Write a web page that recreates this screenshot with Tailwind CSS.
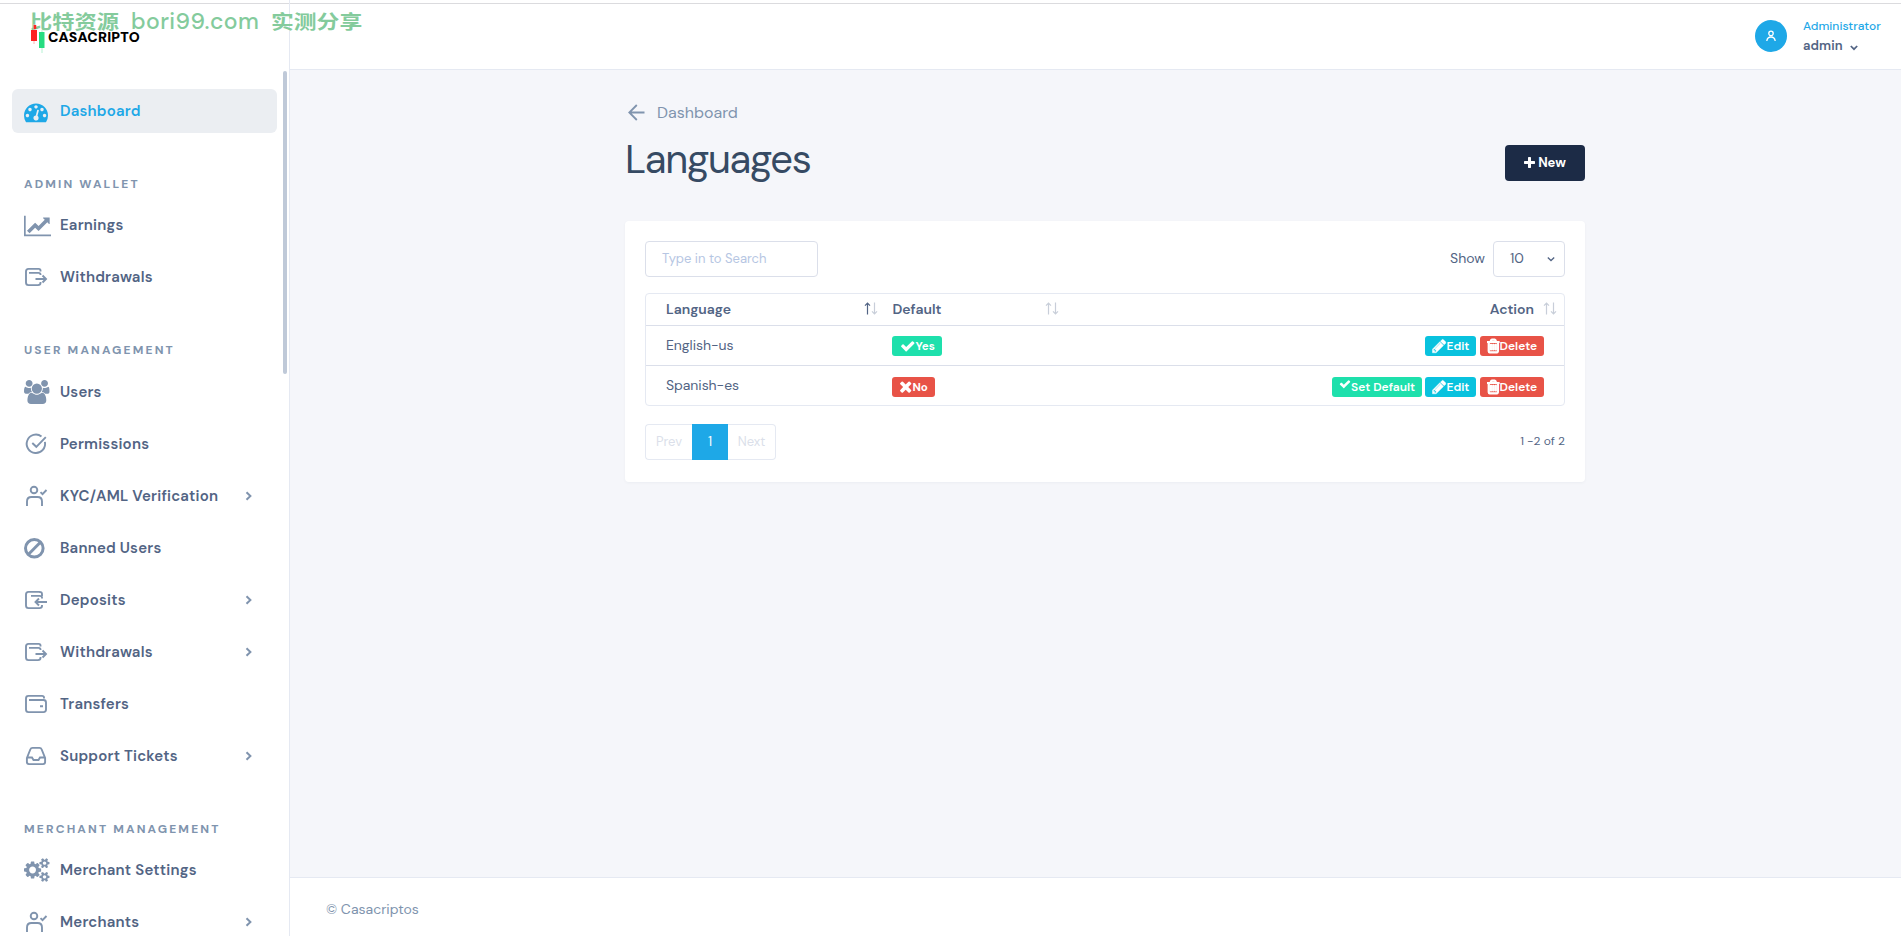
<!DOCTYPE html>
<html lang="en">
<head>
  <meta charset="UTF-8" />
  <meta name="viewport" content="width=device-width, initial-scale=1.0" />
  <title>Languages | Casacriptos</title>

  <script src="https://cdn.jsdelivr.net/npm/@tailwindcss/browser@4"></script>
</head>
<body class="h-[936px] overflow-hidden bg-[#f5f6fa] font-['DM_Sans',Inter,sans-serif] text-[14px] text-[#526484]">

  <!-- Icon set -->
  <svg class="hidden">
    <symbol id="i-dashboard" viewBox="0 0 1792 1792"><path d="M384 1152q0-53-37.5-90.5t-90.5-37.5-90.5 37.5-37.5 90.5 37.5 90.5 90.5 37.5 90.5-37.5 37.5-90.5zm192-448q0-53-37.500-90.500t-90.500-37.500-90.500 37.500-37.500 90.500 37.500 90.500 90.500 37.500 90.500-37.500 37.500-90.500zm428 481l101-382q6-26-7.500-48.500t-38.500-29.500-48 6.500-30 39.500l-101 382q-60 5-107 43.500t-63 98.500q-20 77 20 146t117 89 146-20 89-117q16-60-6-117t-72-91zm660-33q0-53-37.500-90.500t-90.500-37.500-90.500 37.500-37.500 90.500 37.500 90.500 90.500 37.500 90.500-37.500 37.500-90.500zm-640-640q0-53-37.500-90.500t-90.500-37.500-90.500 37.500-37.500 90.500 37.500 90.500 90.500 37.500 90.500-37.500 37.500-90.500zm448 192q0-53-37.500-90.500t-90.500-37.500-90.500 37.500-37.500 90.500 37.500 90.500 90.500 37.500 90.500-37.500 37.500-90.500zm320 448q0 261-141 483-19 29-54 29h-1402q-35 0-54-29-141-221-141-483 0-182 71-348t191-286 286-191 348-71 348 71 286 191 191 286 71 348z"/></symbol>
    <symbol id="i-chart" viewBox="0 0 2048 1792"><path d="M2048 1536v128h-2048v-1536h128v1408h1920zm-128-1248v435q0 21-19.500 29.500t-35.500-7.500l-121-121-633 633q-10 10-23 10t-23-10l-233-233-416 416-192-192 585-585q10-10 23-10t23 10l233 233 464-464-121-121q-16-16-7.500-35.500t29.500-19.500h435q14 0 23 9t9 23z"/></symbol>
    <symbol id="i-users" viewBox="0 0 1920 1792"><path d="M593 896q-162 5-265 128h-134q-82 0-138-40.500t-56-118.500q0-353 124-353 6 0 43.500 21t97.500 42.500 119 21.500q67 0 133-23-5 37-5 66 0 139 81 256zm1071 637q0 120-73 189.500t-194 69.500h-874q-121 0-194-69.500t-73-189.500q0-53 3.500-103.500t14-109 26.500-108.500 43-97.500 62-81 85.500-53.500 111.500-20q10 0 43 21.500t73 48 107 48 135 21.500 135-21.500 107-48 73-48 43-21.500q61 0 111.500 20t85.500 53.500 62 81 43 97.500 26.500 108.500 14 109 3.500 103.500zm-1024-1277q0 106-75 181t-181 75-181-75-75-181 75-181 181-75 181 75 75 181zm704 384q0 159-112.500 271.500t-271.500 112.500-271.500-112.500-112.500-271.500 112.500-271.500 271.500-112.500 271.500 112.500 112.500 271.500zm576 225q0 78-56 118.500t-138 40.500h-134q-103-123-265-128 81-117 81-256 0-29-5-66 66 23 133 23 59 0 119-21.500t97.500-42.500 43.500-21q124 0 124 353zm-128-609q0 106-75 181t-181 75-181-75-75-181 75-181 181-75 181 75 75 181z"/></symbol>
    <symbol id="i-cogs" viewBox="0 0 1920 1792"><path d="M896 896q0-106-75-181t-181-75-181 75-75 181 75 181 181 75 181-75 75-181zm768 512q0-52-38-90t-90-38-90 38-38 90q0 53 37.500 90.500t90.500 37.500 90.500-37.500 37.500-90.500zm0-1024q0-52-38-90t-90-38-90 38-38 90q0 53 37.500 90.500t90.500 37.500 90.500-37.500 37.500-90.500zm-384 421v185q0 10-7 19.500t-16 10.500l-155 24q-11 35-32 76 34 48 90 115 7 11 7 20 0 12-7 19-23 30-82.500 89.500t-78.500 59.500q-11 0-21-7l-115-90q-37 19-77 31-11 108-23 155-7 24-30 24h-186q-11 0-20-7.500t-10-17.500l-23-153q-34-10-75-31l-118 89q-7 7-20 7-11 0-21-8-144-133-144-160 0-9 7-19 10-14 41-53t47-61q-23-44-35-82l-152-24q-10-1-17-9.500t-7-19.500v-185q0-10 7-19.500t16-10.500l155-24q11-35 32-76-34-48-90-115-7-11-7-20 0-12 7-20 22-30 82-89t79-59q11 0 21 7l115 90q34-18 77-32 11-108 23-154 7-24 30-24h186q11 0 20 7.500t10 17.500l23 153q34 10 75 31l118-89q8-7 20-7 11 0 21 8 144 133 144 160 0 8-7 19-12 16-42 54t-45 60q23 48 34 82l152 23q10 2 17 10.500t7 19.500zm640 533v140q0 16-149 31-12 27-30 52 51 113 51 138 0 4-4 7-122 71-124 71-8 0-46-47t-52-68q-20 2-30 2t-30-2q-14 21-52 68t-46 47q-2 0-124-71-4-3-4-7 0-25 51-138-18-25-30-52-149-15-149-31v-140q0-16 149-31 13-29 30-52-51-113-51-138 0-4 4-7 4-2 35-20t59-34 30-16q8 0 46 46.500t52 67.500q20-2 30-2t30 2q51-71 92-112l6-2q4 0 124 70 4 3 4 7 0 25-51 138 17 23 30 52 149 15 149 31zm0-1024v140q0 16-149 31-12 27-30 52 51 113 51 138 0 4-4 7-122 71-124 71-8 0-46-47t-52-68q-20 2-30 2t-30-2q-14 21-52 68t-46 47q-2 0-124-71-4-3-4-7 0-25 51-138-18-25-30-52-149-15-149-31v-140q0-16 149-31 13-29 30-52-51-113-51-138 0-4 4-7 4-2 35-20t59-34 30-16q8 0 46 46.500t52 67.500q20-2 30-2t30 2q51-71 92-112l6-2q4 0 124 70 4 3 4 7 0 25-51 138 17 23 30 52 149 15 149 31z"/></symbol>
    <symbol id="i-out" viewBox="0 0 24 24"><path d="M16.500 6.500V5.500Q16.500 3.900 14.800 3.900H4.500Q2 3.900 2 6.500V17.500Q2 20.100 4.500 20.100H14Q16.500 20.100 16.500 18V17M5 7.900H14.500Q16.500 7.900 16.500 9.500V10M11.500 14H22M18.500 10.500L22 14l-3.500 3.500" fill="none" stroke="currentColor" stroke-width="1.900"/></symbol>
    <symbol id="i-in" viewBox="0 0 24 24"><path d="M16.500 5Q16.500 3.900 15 3.900H4.500Q2 3.900 2 6.500V17.500Q2 20.100 4.500 20.100H15.500Q18 20.100 18 18V17M7 7.900H15.500Q18 7.900 18 9.500V10.500M15.500 3.900Q18 3.900 18 6V8M23 14H11.500M15 10.500L11.500 14l3.500 3.500" fill="none" stroke="currentColor" stroke-width="1.900"/></symbol>
    <symbol id="i-check-circle" viewBox="0 0 24 24"><path d="M20.900 9.900A9.200 9.200 0 1 1 17.500 4.500M8.300 11l4 3.800 9.500-9.600" fill="none" stroke="currentColor" stroke-width="1.900"/></symbol>
    <symbol id="i-user-check" viewBox="0 0 24 24"><path d="M3 22v-4.500q0-4.500 4.500-4.500h6q4.500 0 4.500 4.500V22M16.500 8.200l2 2 4-4.200" fill="none" stroke="currentColor" stroke-width="1.900"/><circle cx="10" cy="6" r="3.300" fill="none" stroke="currentColor" stroke-width="1.900"/></symbol>
    <symbol id="i-ban" viewBox="0 0 24 24"><path d="M4.500 18.200L16.200 6.500" stroke="currentColor" stroke-width="3"/><circle cx="10.300" cy="12.300" r="8.800" fill="none" stroke="currentColor" stroke-width="3"/></symbol>
    <symbol id="i-wallet" viewBox="0 0 24 24"><path d="M20 6.500V5.500Q20 3.900 18 3.900H4.500Q2 3.900 2 6.400V17.500Q2 20.100 4.500 20.100H19.500Q22 20.100 22 17.600V10.500Q22 8 19.500 8H5M16 14.200h3" fill="none" stroke="currentColor" stroke-width="1.900"/></symbol>
    <symbol id="i-inbox" viewBox="0 0 24 24"><path d="M2.900 14L6.300 5.500Q6.900 3.900 8.500 3.900H15.500Q17.100 3.900 17.700 5.500L21.100 14V18Q21.100 20.100 19 20.100H5Q2.900 20.100 2.900 18ZM3 13.500H8L9.500 16H14.500L16 13.500H21" fill="none" stroke="currentColor" stroke-width="1.900"/></symbol>
    <symbol id="i-chevron" viewBox="0 0 8 10"><path d="M1.500 1.200L5.400 5L1.500 8.800" fill="none" stroke="currentColor" stroke-width="2"/></symbol>
    <symbol id="i-check" viewBox="0 0 1792 1792"><path d="M1671 566q0 40-28 68l-724 724-136 136q-28 28-68 28t-68-28l-136-136-362-362q-28-28-28-68t28-68l136-136q28-28 68-28t68 28l294 295 656-657q28-28 68-28t68 28l136 136q28 28 28 68z"/></symbol>
    <symbol id="i-times" viewBox="192 0 1408 1792"><path d="M1490 1322q0 40-28 68l-136 136q-28 28-68 28t-68-28l-294-294-294 294q-28 28-68 28t-68-28l-136-136q-28-28-28-68t28-68l294-294-294-294q-28-28-28-68t28-68l136-136q28-28 68-28t68 28l294 294 294-294q28-28 68-28t68 28l136 136q28 28 28 68t-28 68l-294 294 294 294q28 28 28 68z"/></symbol>
    <symbol id="i-plus" viewBox="192 0 1408 1792"><path d="M1600 736v192q0 40-28 68t-68 28h-416v416q0 40-28 68t-68 28h-192q-40 0-68-28t-28-68v-416h-416q-40 0-68-28t-28-68v-192q0-40 28-68t68-28h416v-416q0-40 28-68t68-28h192q40 0 68 28t28 68v416h416q40 0 68 28t28 68z"/></symbol>
    <symbol id="i-pencil" viewBox="128 0 1536 1792"><path d="M491 1536l91-91-235-235-91 91v107h128v128h107zm523-928q0-22-22-22-10 0-17 7l-542 542q-7 7-7 17 0 22 22 22 10 0 17-7l542-542q7-7 7-17zm-54-192l416 416-832 832h-416v-416zm683 96q0 53-37 90l-166 166-416-416 166-165q36-38 90-38 53 0 91 38l235 234q37 39 37 91z" stroke="currentColor" stroke-width="40"/></symbol>
    <symbol id="i-trash" viewBox="192 0 1408 1792"><path d="M704 736v576q0 14-9 23t-23 9h-64q-14 0-23-9t-9-23v-576q0-14 9-23t23-9h64q14 0 23 9t9 23zm256 0v576q0 14-9 23t-23 9h-64q-14 0-23-9t-9-23v-576q0-14 9-23t23-9h64q14 0 23 9t9 23zm256 0v576q0 14-9 23t-23 9h-64q-14 0-23-9t-9-23v-576q0-14 9-23t23-9h64q14 0 23 9t9 23zm128 724v-948h-896v948q0 22 7 40.500t14.500 27 10.500 8.500h832q3 0 10.500-8.500t14.500-27 7-40.500zm-672-1076h448l-48-117q-7-9-17-11h-317q-10 2-17 11zm928 32v64q0 14-9 23t-23 9h-96v948q0 83-47 143.500t-113 60.500h-832q-66 0-113-58.500t-47-141.500v-952h-96q-14 0-23-9t-9-23v-64q0-14 9-23t23-9h309l70-167q15-37 54-63t79-26h320q40 0 79 26t54 63l70 167h309q14 0 23 9t9 23z" stroke="currentColor" stroke-width="120"/></symbol>
    <symbol id="i-sort-up" viewBox="0 0 7 13"><path d="M3.500 12.500V1.200M1 3.700L3.500 1.200L6 3.700" fill="none" stroke="currentColor" stroke-width="1.200"/></symbol>
    <symbol id="i-sort-down" viewBox="0 0 7 13"><path d="M3.500 .5V11.800M1 9.300L3.500 11.800L6 9.300" fill="none" stroke="currentColor" stroke-width="1.200"/></symbol>
  </svg>

  <!-- Watermark -->
  <div class="absolute left-[30px] top-[12px] z-10 h-[18px] w-[340px] whitespace-nowrap font-bold leading-[18px] text-[#84cb9c]">
    <span class="absolute left-0 top-0 origin-left scale-x-[1.17] font-['Noto_Sans_CJK_SC',sans-serif] text-[19px]">比特资源</span>
    <span class="absolute left-[101px] top-0 font-['DM_Sans',Inter,sans-serif] text-[23px] font-medium tracking-[0.4px]">bori99.com</span>
    <span class="absolute left-[241px] top-0 origin-left scale-x-[1.2] font-['Noto_Sans_CJK_SC',sans-serif] text-[19px]">实测分享</span>
  </div>

  <div class="flex h-full border-t-[3px] border-white">

    <!-- Sidebar -->
    <aside class="relative -mt-[3px] w-[290px] shrink-0 border-r border-[#e5e9f2] bg-white pt-[3px]">
      <div class="h-px bg-[#dbdbde]"></div>
      <a class="relative z-20 flex h-[66px] pl-[30px] pt-5">
        <svg class="h-[30px] w-[17px]" viewBox="0 0 17 30"><path d="M4 0v20" stroke="#ffb0b0" stroke-width="1"/><path d="M12 6v23" stroke="#b5f2d3" stroke-width="1"/><path d="M5 1v4" stroke="#f22" stroke-width="2.500"/><path d="M1 6h6v11H1z" fill="#fe2222"/><path d="M9 8h5.500v16H9z" fill="#26dc80"/></svg>
        <span class="ml-px mt-[7px] h-3 font-['DM_Sans',Inter,sans-serif] text-[14px] font-black leading-[12px] tracking-[0.2px] text-black">CASACRIPTO</span>
      </a>
      <div class="absolute right-[2px] top-[71px] h-[303px] w-1 rounded-full bg-[#bfc9d8]"></div>

      <nav class="mt-[15px] pl-3 pr-3 pt-1 text-[15px] font-semibold tracking-[0.2px]">
        <a class="mb-1 flex h-11 w-[265px] items-center rounded-md bg-[#ebeef2] pl-3 text-[#1ea8e7]"><span class="w-9"><svg class="mt-px h-6 w-6 fill-current"><use href="#i-dashboard"/></svg></span>Dashboard</a>

        <h6 class="mb-1 flex h-[62.5px] items-end pb-[7px] pl-3 text-[12px] font-bold tracking-[2.150px] text-[#8094ae]">ADMIN WALLET</h6>
        <a class="mb-2 flex h-11 items-center pl-3"><span class="w-9 text-[#8094ae]"><svg class="h-6 w-[27.4px] fill-current"><use href="#i-chart"/></svg></span>Earnings</a>
        <a class="mb-1 flex h-11 items-center pl-3"><span class="w-9 text-[#8094ae]"><svg class="-mt-px h-6 w-6"><use href="#i-out"/></svg></span>Withdrawals</a>

        <h6 class="mb-1 flex h-[62.5px] items-end pb-[7px] pl-3 text-[12px] font-bold tracking-[2.150px] text-[#8094ae]">USER MANAGEMENT</h6>
        <a class="mb-2 flex h-11 items-center pl-3"><span class="w-9 text-[#8094ae]"><svg class="h-6 w-[25.7px] fill-current"><use href="#i-users"/></svg></span>Users</a>
        <a class="mb-2 flex h-11 items-center pl-3"><span class="w-9 text-[#8094ae]"><svg class="h-6 w-6"><use href="#i-check-circle"/></svg></span>Permissions</a>
        <a class="mb-2 flex h-11 items-center pl-3"><span class="w-9 text-[#8094ae]"><svg class="h-6 w-6"><use href="#i-user-check"/></svg></span>KYC/AML Verification<svg class="ml-auto mr-6 h-[10px] w-2 text-[#8094ae]"><use href="#i-chevron"/></svg></a>
        <a class="mb-2 flex h-11 items-center pl-3"><span class="w-9 text-[#8094ae]"><svg class="h-6 w-6"><use href="#i-ban"/></svg></span>Banned Users</a>
        <a class="mb-2 flex h-11 items-center pl-3"><span class="w-9 text-[#8094ae]"><svg class="h-6 w-6"><use href="#i-in"/></svg></span>Deposits<svg class="ml-auto mr-6 h-[10px] w-2 text-[#8094ae]"><use href="#i-chevron"/></svg></a>
        <a class="mb-2 flex h-11 items-center pl-3"><span class="w-9 text-[#8094ae]"><svg class="h-6 w-6"><use href="#i-out"/></svg></span>Withdrawals<svg class="ml-auto mr-6 h-[10px] w-2 text-[#8094ae]"><use href="#i-chevron"/></svg></a>
        <a class="mb-2 flex h-11 items-center pl-3"><span class="w-9 text-[#8094ae]"><svg class="h-6 w-6"><use href="#i-wallet"/></svg></span>Transfers</a>
        <a class="mb-1 flex h-11 items-center pl-3"><span class="w-9 text-[#8094ae]"><svg class="h-6 w-6"><use href="#i-inbox"/></svg></span>Support Tickets<svg class="ml-auto mr-6 h-[10px] w-2 text-[#8094ae]"><use href="#i-chevron"/></svg></a>

        <h6 class="mb-1 flex h-[62.5px] items-end pb-[7px] pl-3 text-[12px] font-bold tracking-[2.150px] text-[#8094ae]">MERCHANT MANAGEMENT</h6>
        <a class="mb-2 flex h-11 items-center pl-3"><span class="w-9 text-[#8094ae]"><svg class="-mt-px h-6 w-[25.7px] fill-current"><use href="#i-cogs"/></svg></span>Merchant Settings</a>
        <a class="flex h-11 items-center pl-3"><span class="w-9 text-[#8094ae]"><svg class="-mt-px h-6 w-6"><use href="#i-user-check"/></svg></span>Merchants<svg class="-mt-px ml-auto mr-6 h-[10px] w-2 text-[#8094ae]"><use href="#i-chevron"/></svg></a>
      </nav>
    </aside>

    <div class="flex min-w-0 flex-1 flex-col">
      <!-- Header -->
      <header class="flex h-[67px] shrink-0 justify-end border-b border-t border-b-[#e5e9f2] border-t-[#dbdbde] bg-white pr-5">
        <div class="mt-4 flex h-8 w-8 items-center justify-center rounded-full bg-[#1ea8e7]">
          <svg class="h-3 w-3" viewBox="0 0 12 12" fill="none" stroke="#fff" stroke-width="1.300"><circle cx="6" cy="3.400" r="2.200"/><path d="M1.800 11q.5-4 4.200-4t4.200 4"/></svg>
        </div>
        <div class="ml-4 mt-[14px] w-[78px] whitespace-nowrap">
          <div class="text-[12px] font-medium leading-4 text-[#1ea8e7]">Administrator</div>
          <div class="mt-1 flex items-center text-[13px] font-semibold leading-4 tracking-[0.1px]">admin<svg class="ml-[7px] mt-[3px] h-2 w-2" viewBox="0 0 8 8"><path d="M.8 2L4 5.200L7.200 2" fill="none" stroke="currentColor" stroke-width="1.700"/></svg></div>
        </div>
      </header>

      <!-- Content -->
      <main class="flex-1 pl-[335px]">
        <div class="w-[960px] pt-[31px]">
          <a class="flex h-6 items-center pl-[3px] text-[16px] text-[#8094ae]"><svg class="mr-3 mt-[-2px] h-[17px] w-[17px]" viewBox="0 0 17 17"><path d="M16.500 8.500H1.500M8.800 1L1.300 8.500L8.800 16" fill="none" stroke="currentColor" stroke-width="1.800"/></svg>Dashboard</a>
          <div class="flex h-[70px] justify-between">
            <h2 class="mt-[10px] text-[40px] leading-[48px] tracking-[-1.300px] text-[#364a63]">Languages</h2>
            <a class="mt-5 flex h-9 w-20 items-center justify-center rounded bg-[#1c2b46] text-[13px] font-bold text-white"><svg class="mr-[3px] mt-[-1px] h-[14px] w-[11px] fill-current"><use href="#i-plus"/></svg>New</a>
          </div>

          <div class="mt-[26px] h-[261px] rounded bg-white px-5 pt-5 shadow-[0_1px_3px_rgba(54,74,99,0.05)]">
            <div class="flex justify-between">
              <div class="flex h-9 w-[173px] items-center rounded border border-[#dbdfea] pl-4 text-[13px] text-[#b6c6e3]">Type in to Search</div>
              <div class="flex items-center">
                <span class="mr-2 -mt-px">Show</span>
                <div class="flex h-9 w-[72px] items-center justify-between rounded border border-[#dbdfea] pb-px pl-4 pr-[9px]">10<svg class="h-2 w-2" viewBox="0 0 8 8"><path d="M.8 2.500L4 5.500L7.200 2.500" fill="none" stroke="currentColor" stroke-width="1.300"/></svg></div>
              </div>
            </div>

            <div class="mt-4 h-[113px] rounded border border-[#e5e9f2]">
              <div class="flex h-8 items-center border-b border-[#dbdfea] pl-5 font-semibold">
                <span class="w-[197.500px]">Language</span>
                <span class="-mt-[3px] flex w-[29px]"><svg class="h-[13px] w-[7px]"><use href="#i-sort-up"/></svg><svg class="h-[13px] w-[7px] text-[#c8ced9]"><use href="#i-sort-down"/></svg></span>
                <span class="w-[152px]">Default</span>
                <span class="-mt-[3px] flex text-[#c8ced9]"><svg class="h-[13px] w-[7px]"><use href="#i-sort-up"/></svg><svg class="h-[13px] w-[7px]"><use href="#i-sort-down"/></svg></span>
                <span class="ml-auto">Action</span>
                <span class="-mt-[3px] ml-[9px] mr-[7px] flex text-[#c8ced9]"><svg class="h-[13px] w-[7px]"><use href="#i-sort-up"/></svg><svg class="h-[13px] w-[7px]"><use href="#i-sort-down"/></svg></span>
              </div>
              <div class="flex h-10 border-b border-[#dbdfea] pl-5 pr-5">
                <span class="w-[226px] leading-[39px] tracking-[-0.050px]">English-us</span>
                <span class="mt-[10px] flex h-5 w-[50px] items-center rounded-[3px] bg-[#1ee0ac] pl-2 text-[11.500px] font-bold text-white"><svg class="-mt-px h-[16px] w-[15.500px] shrink-0 fill-current"><use href="#i-check"/></svg><span class="mt-px">Yes</span></span>
                <span class="ml-auto mt-[10px] flex h-5 w-[51px] items-center rounded-[3px] bg-[#09c2de] pl-[7px] text-[12px] font-semibold text-white"><svg class="h-[16px] w-[14.500px] shrink-0 fill-current"><use href="#i-pencil"/></svg>Edit</span>
                <span class="ml-1 mt-[10px] flex h-5 w-16 items-center rounded-[3px] bg-[#e85347] pl-[7px] text-[12px] font-semibold text-white"><svg class="-mt-px h-[16px] w-[12.600px] shrink-0 fill-current"><use href="#i-trash"/></svg>Delete</span>
              </div>
              <div class="flex h-[39px] pl-5 pr-5">
                <span class="w-[226px] leading-[39px] tracking-[-0.050px]">Spanish-es</span>
                <span class="mt-[11px] flex h-5 w-[43px] items-center rounded-[3px] bg-[#e85347] pl-[7px] text-[11.500px] font-bold text-white"><svg class="-mt-px h-[17px] w-[13.400px] shrink-0 fill-current"><use href="#i-times"/></svg><span class="mt-px">No</span></span>
                <span class="ml-auto mt-[11px] flex h-5 w-[90px] items-center rounded-[3px] bg-[#1ee0ac] pl-[7px] text-[12px] font-semibold whitespace-nowrap text-white"><svg class="-mt-[6px] h-[12px] w-[12px] shrink-0 fill-current"><use href="#i-check"/></svg>Set Default</span>
                <span class="ml-[3px] mt-[11px] flex h-5 w-[51px] items-center rounded-[3px] bg-[#09c2de] pl-[7px] text-[12px] font-semibold text-white"><svg class="h-[16px] w-[14.500px] shrink-0 fill-current"><use href="#i-pencil"/></svg>Edit</span>
                <span class="ml-1 mt-[11px] flex h-5 w-16 items-center rounded-[3px] bg-[#e85347] pl-[7px] text-[12px] font-semibold text-white"><svg class="-mt-px h-[16px] w-[12.600px] shrink-0 fill-current"><use href="#i-trash"/></svg>Delete</span>
              </div>
            </div>

            <div class="mt-[18px] flex h-9 items-center justify-between">
              <div class="flex h-9 w-[131px] text-center text-[13px] leading-[34px] text-[#dbdfea]">
                <span class="w-[47px] rounded-l border border-r-0 border-[#e5e9f2]">Prev</span>
                <span class="w-9 bg-[#1ea8e7] leading-9 text-white">1</span>
                <span class="w-12 rounded-r border border-l-0 border-[#e5e9f2]">Next</span>
              </div>
              <span class="-mt-[2px] text-[12px]">1 -2 of 2</span>
            </div>
          </div>
        </div>
      </main>

      <!-- Footer -->
      <footer class="flex h-[59px] shrink-0 items-center border-t border-[#e5e9f2] bg-white pl-9 pt-[5px] text-[#8094ae]">© Casacriptos</footer>
    </div>
  </div>
</body>
</html>
